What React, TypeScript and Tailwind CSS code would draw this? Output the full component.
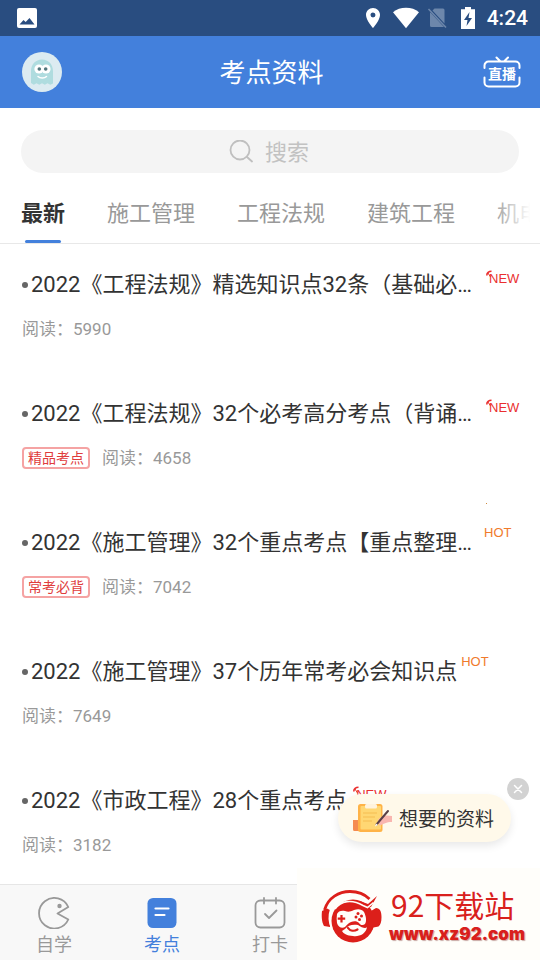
import type { ReactNode } from 'react'
import { MdPlace } from 'react-icons/md'

type Flag = 'NEW' | 'HOT'

interface Article {
  title: string
  views: number
  flag: Flag
  tag?: string
  clipped?: boolean
  spark?: boolean
}

const TABS = ['最新', '施工管理', '工程法规', '建筑工程', '机电工程']

const ARTICLES: Article[] = [
  { title: '2022《工程法规》精选知识点32条（基础必…', views: 5990, flag: 'NEW', clipped: true },
  { title: '2022《工程法规》32个必考高分考点（背诵…', views: 4658, flag: 'NEW', tag: '精品考点', clipped: true },
  { title: '2022《施工管理》32个重点考点【重点整理…', views: 7042, flag: 'HOT', tag: '常考必背', clipped: true, spark: true },
  { title: '2022《施工管理》37个历年常考必会知识点', views: 7649, flag: 'HOT' },
  { title: '2022《市政工程》28个重点考点', views: 3182, flag: 'NEW' },
]

function StatusBar() {
  return (
    <div className="flex h-9 shrink-0 items-center justify-between bg-[#294d80] pl-4 pr-3 text-white">
      <svg className="size-[22px]" viewBox="0 0 22 22" aria-hidden="true">
        <rect x="1" y="1" width="20" height="20" rx="2" fill="#fff" />
        <path d="M3.500 17.500l4-4.500 2.200 2L13.500 11l5 6.500z" fill="#294d80" />
      </svg>
      <div className="flex items-center">
        <MdPlace className="size-6" />
        <svg className="ml-2 h-[22px] w-[26px]" viewBox="0 0 26 22" aria-hidden="true">
          <path d="M0 5.200C3.600 2.300 8 .8 13 .8s9.400 1.500 13 4.400L13 21.200z" fill="#fff" />
        </svg>
        <svg className="ml-2 h-[22px] w-5" viewBox="0 0 20 22" aria-hidden="true">
          <path d="M7.500 1.500h8.500a1.500 1.500 0 0 1 1.500 1.500v13.500L5.500 3.500zM3.500 5.500L17 20H4.500A1.500 1.500 0 0 1 3 18.500V6z" fill="#6d87ab" />
          <path d="M1.500 2L19 20.500" stroke="#6d87ab" strokeWidth="1.500" />
        </svg>
        <svg className="ml-3.5 h-[22px] w-3.5" viewBox="0 0 14 22" aria-hidden="true">
          <path d="M4 0h6v2.200h4V22H0V2.200h4z" fill="#fff" />
          <path d="M8.500 5L3 13h3.500l-1 6L11 11H7.500z" fill="#294d80" />
        </svg>
        <span className="ml-3 text-[21px] leading-6 font-medium">4:24</span>
      </div>
    </div>
  )
}

function Avatar() {
  return (
    <svg className="size-10" viewBox="0 0 40 40" aria-hidden="true">
      <circle cx="20" cy="20" r="20" fill="#dcebf1" />
      <path
        d="M9 31V19c0-6.500 4.500-11.500 11-11.500S31 12.500 31 19v12.500l-2.700 1.300-2.800-1.500-2.700 1.500-2.800-1.500-2.700 1.500-2.800-1.500-2.700 1.500L9 31z"
        fill="#afdcdf"
      />
      <circle cx="17" cy="17" r="4.600" fill="#fff" />
      <circle cx="24" cy="17" r="4.600" fill="#fff" />
      <circle cx="17.300" cy="17" r="1.800" fill="#52767c" />
      <circle cx="23.700" cy="17" r="1.800" fill="#52767c" />
      <path d="M16 24.500c2 2 6.500 2 8.500 0" fill="none" stroke="#fff" strokeWidth="1.500" strokeLinecap="round" />
    </svg>
  )
}

function Header() {
  return (
    <header className="grid h-[72px] shrink-0 grid-cols-[1fr_auto_1fr] items-center bg-[#4380dc] pl-[22px] pr-[19px] text-white">
      <button type="button" className="size-10 justify-self-start" aria-label="头像">
        <Avatar />
      </button>
      <h1 className="pt-0.5 text-[26px] leading-9">考点资料</h1>
      <button type="button" className="relative h-8 w-[38px] justify-self-end">
        <svg className="absolute inset-0 size-full" viewBox="0 0 38 32" fill="none" stroke="#fff" strokeWidth="2" strokeLinecap="round" aria-hidden="true">
          <path d="M1.500 12V9.500a4 4 0 0 1 4-4h27a4 4 0 0 1 4 4V12M1.500 21.500v5a4 4 0 0 0 4 4h27a4 4 0 0 0 4-4v-5M13.500 1.500l4 4M25 1.500l-4 4" />
        </svg>
        <span className="relative block pt-1 text-[14px] leading-7 font-bold">直播</span>
      </button>
    </header>
  )
}

function SearchBox() {
  return (
    <div className="px-[21px] pt-[22px]">
      <label className="flex h-[43px] items-center justify-center gap-3 rounded-full bg-[#f4f4f4]">
        <svg className="size-6" viewBox="0 0 24 24" fill="none" stroke="#bfbfbf" strokeWidth="1.800" strokeLinecap="round" aria-label="搜索">
          <circle cx="11" cy="10" r="9.500" />
          <path d="M18 17l5 4.500" />
        </svg>
        <input
          type="text"
          placeholder="搜索"
          className="w-[46px] bg-transparent pt-0.5 text-[22px] leading-8 outline-none placeholder:text-[#c2c2c2]"
        />
      </label>
    </div>
  )
}

function TabBar() {
  return (
    <nav className="relative flex h-[71px] shrink-0 gap-[42px] overflow-hidden border-b border-[#e8e8e8] px-[21px]">
      {TABS.map((tab, i) => (
        <button
          key={tab}
          type="button"
          className={
            i === 0
              ? 'flex shrink-0 flex-col items-center justify-between text-[22px] font-bold text-[#333]'
              : 'flex shrink-0 flex-col items-center justify-between text-[22px] text-[#999]'
          }
        >
          <span className="pt-[25px] leading-8">{tab}</span>
          {i === 0 && <span className="h-[3px] w-9 rounded-sm bg-[#4380dc]" />}
        </button>
      ))}
      <span className="pointer-events-none absolute inset-y-0 right-0 w-12 bg-linear-to-r from-white/0 to-white to-80%" />
    </nav>
  )
}

function FlagLabel({ flag, spark }: { flag: Flag; spark?: boolean }) {
  if (flag === 'HOT') {
    return (
      <span className="relative block h-8 w-10 shrink-0 pl-1 font-[Liberation_Sans] text-[13px] leading-3 text-[#f07a2c]">
        HOT
        {spark && <span className="absolute -top-6 left-1.5 size-px bg-[#d08a3c]" />}
      </span>
    )
  }
  return (
    <span className="relative block h-8 w-10 shrink-0 pt-1 pl-[9px] font-[Liberation_Sans] text-[13px] leading-3 text-[#ea2f2f]">
      <svg className="absolute top-px left-1.5 h-3 w-2" viewBox="0 0 8 12" fill="none" stroke="#ea2f2f" aria-hidden="true">
        <path d="M.8 5.500C.8 3 2.800 1.300 5.500 1.300" strokeWidth="1.600" />
        <path d="M2 3l2.500 4" strokeWidth="1" />
      </svg>
      NEW
    </span>
  )
}

function ArticleRow({ article }: { article: Article }) {
  return (
    <li className="pt-[25px] pr-5 pb-[31px] pl-[22px]">
      <a href="#" className="flex items-center text-[22px] leading-8 text-[#333]">
        <span className="mr-[3px] size-1.5 shrink-0 rounded-full bg-[#666]" />
        <span className={article.clipped ? 'flex-1 truncate' : 'truncate'}>{article.title}</span>
        <FlagLabel flag={article.flag} spark={article.spark} />
      </a>
      <div className="mt-[15px] flex items-center gap-3 text-[17px] leading-[26px] text-[#999]">
        {article.tag && (
          <span className="rounded-sm border-2 border-[#f5a3a3] px-1 text-[14px] leading-[18px] text-[#e03c3c]">
            {article.tag}
          </span>
        )}
        <span>阅读：{article.views}</span>
      </div>
    </li>
  )
}

function WantedPill() {
  return (
    <div className="absolute right-[29px] bottom-[42px]">
      <button
        type="button"
        className="flex h-12 items-center gap-1.5 rounded-full bg-[#fff9ea] pr-[17px] pl-[15px] text-[19px] text-[#333] shadow-[0_4px_8px_rgba(0,0,0,0.09)]"
      >
        <svg className="h-[30px] w-10" viewBox="0 0 40 30" aria-hidden="true">
          <path d="M0 17h6v11H1.500A1.500 1.500 0 0 1 0 26.500z" fill="#f58b50" />
          <rect x="5" y="1" width="24.500" height="28" rx="2.500" fill="#ffb347" />
          <rect x="7.500" y="3" width="20.500" height="23.500" rx="1" fill="#ffd773" />
          <rect x="12" y="1" width="12" height="4.500" rx="1.500" fill="#fff3dd" />
          <path d="M10 10h14M10 14h12M10 18h9" stroke="#f5bd53" strokeWidth="1" />
          <path d="M25 17c3-4 6-5.500 14-4v6c-6 0-8 2-12.500 3.500z" fill="#f9b6b0" />
          <path d="M23.500 21.500L35 8" stroke="#5a4047" strokeWidth="2" strokeLinecap="round" />
          <path d="M22 23.500l1-3 2 1.500z" fill="#fff" />
        </svg>
        <span className="pt-1">想要的资料</span>
      </button>
      <button
        type="button"
        aria-label="关闭"
        className="absolute -top-4 -right-[18px] flex size-[22px] items-center justify-center rounded-full bg-[#d2d2d2]"
      >
        <svg className="size-2.5" viewBox="0 0 10 10" stroke="#fff" strokeWidth="1.500" strokeLinecap="round">
          <path d="M1.500 1.500l7 7M8.500 1.500l-7 7" />
        </svg>
      </button>
    </div>
  )
}

function NavItem({ label, active, children }: { label: string; active?: boolean; children: ReactNode }) {
  return (
    <a
      href="#"
      className={
        active
          ? 'flex flex-col items-center gap-0.5 pt-3 text-[18px] leading-7 text-[#4380dc]'
          : 'flex flex-col items-center gap-0.5 pt-3 text-[18px] leading-7 text-[#999]'
      }
    >
      <svg className="h-8 w-8" viewBox="0 0 32 32" fill="none" stroke="currentColor" strokeWidth="1.800" strokeLinecap="round" strokeLinejoin="round" aria-hidden="true">
        {children}
      </svg>
      {label}
    </a>
  )
}

function BottomNav() {
  return (
    <nav className="grid h-[76px] shrink-0 grid-cols-5 border-t border-[#e6e6e6] bg-[#f8f8f8]">
      <NavItem label="自学">
        <path d="M30.300 10A15.300 15.300 0 1 0 30.300 22.500L19.500 16.500z" />
        <circle cx="21.500" cy="9" r="2.200" fill="currentColor" stroke="none" />
      </NavItem>
      <NavItem label="考点" active>
        <rect x="1.500" y="1" width="29" height="30" rx="5.500" fill="currentColor" stroke="none" />
        <path d="M9.500 11.500h13M9.500 18h9" stroke="#fff" strokeWidth="2.200" />
      </NavItem>
      <NavItem label="打卡">
        <rect x="1.500" y="3.500" width="29" height="27" rx="5" />
        <path d="M10 1v5.500M22 1v5.500M11 17l4 4 7.500-7.500" />
      </NavItem>
    </nav>
  )
}

function SiteBadge() {
  return (
    <div className="absolute right-0 bottom-0 flex h-[92px] w-[243px] items-center gap-1.5 bg-[#fffefa] pl-6 text-[#d9201c]">
      <svg className="mt-1 h-[54px] w-[62px] shrink-0" viewBox="0 0 62 54" aria-hidden="true">
        <circle cx="32" cy="32" r="21.500" fill="#dc1f1a" />
        <path d="M8 22C12 11 23 6.500 33 7.500c6 .5 10 3 13 5.500" fill="none" stroke="#fffefa" strokeWidth="3.500" />
        <path d="M3.500 21C7 8.500 18 2.500 29 2.500c9 0 15 3 19.500 7.500" fill="none" stroke="#dc1f1a" strokeWidth="2.800" />
        <path d="M40 12.500l7 2.500 9-8-6 11-6 1.500z" fill="#dc1f1a" />
        <path d="M14 20C20 11.500 31 10 42 16.500l4.500 2 6-5" fill="none" stroke="#fffefa" strokeWidth="1.600" />
        <path d="M1 22l5-2.500L9 21v17l-6-1C.5 33 .5 26 1 22zM50 22l5-3c4 .5 5.500 3 5.500 9 0 5-1 8-3 9.500L50 39z" fill="#dc1f1a" />
        <path d="M9.800 20c-2 6-2 13 .8 19" fill="none" stroke="#fffefa" strokeWidth="1.600" />
        <path
          d="M16 25c1-3 5-4 8-3 3 1 5 1 9-1 4-1.500 8-1 10 2 2 4 3 9 1 12-2 2-5 1-6-1-2-2-5-2-8-1-3 1-4 3-6 5-3 2-7 0-8-4-.5-3-.5-6 0-9z"
          fill="#fffefa"
        />
        <path d="M20.500 26v7.500M16.700 29.700h7.500" stroke="#dc1f1a" strokeWidth="2.200" />
        <circle cx="37" cy="24.500" r="1.500" fill="#dc1f1a" />
        <circle cx="40.500" cy="27" r="1.500" fill="#dc1f1a" />
        <circle cx="35" cy="28" r="1.500" fill="#dc1f1a" />
        <circle cx="38.500" cy="30.500" r="1.500" fill="#dc1f1a" />
        <path d="M24 40c3-4 8-5 13-4 4 3 8 4 9 2-1 7-8 10-14 9-6 0-10-3-11-5z" fill="#fffefa" />
        <path d="M27 39c2 3 6 3.500 9.500 1.500" fill="none" stroke="#dc1f1a" strokeWidth="2.200" strokeLinecap="round" />
      </svg>
      <div>
        <p className="pl-0.5 font-[Noto_Sans_CJK_SC] text-[30px] leading-10">92下载站</p>
        <p className="font-[Inter] text-[17px] leading-5 font-black text-shadow-[1px_1px_1px_#c9a9a5]">www.xz92.com</p>
      </div>
    </div>
  )
}

export default function App() {
  return (
    <div className="relative flex h-screen flex-col overflow-hidden bg-white font-[Roboto,'Noto_Sans_CJK_SC',sans-serif]">
      <StatusBar />
      <Header />
      <SearchBox />
      <TabBar />
      <main className="relative min-h-0 flex-1">
        <ul className="h-full overflow-hidden">
          {ARTICLES.map((article) => (
            <ArticleRow key={article.title} article={article} />
          ))}
        </ul>
        <WantedPill />
      </main>
      <BottomNav />
      <SiteBadge />
    </div>
  )
}
